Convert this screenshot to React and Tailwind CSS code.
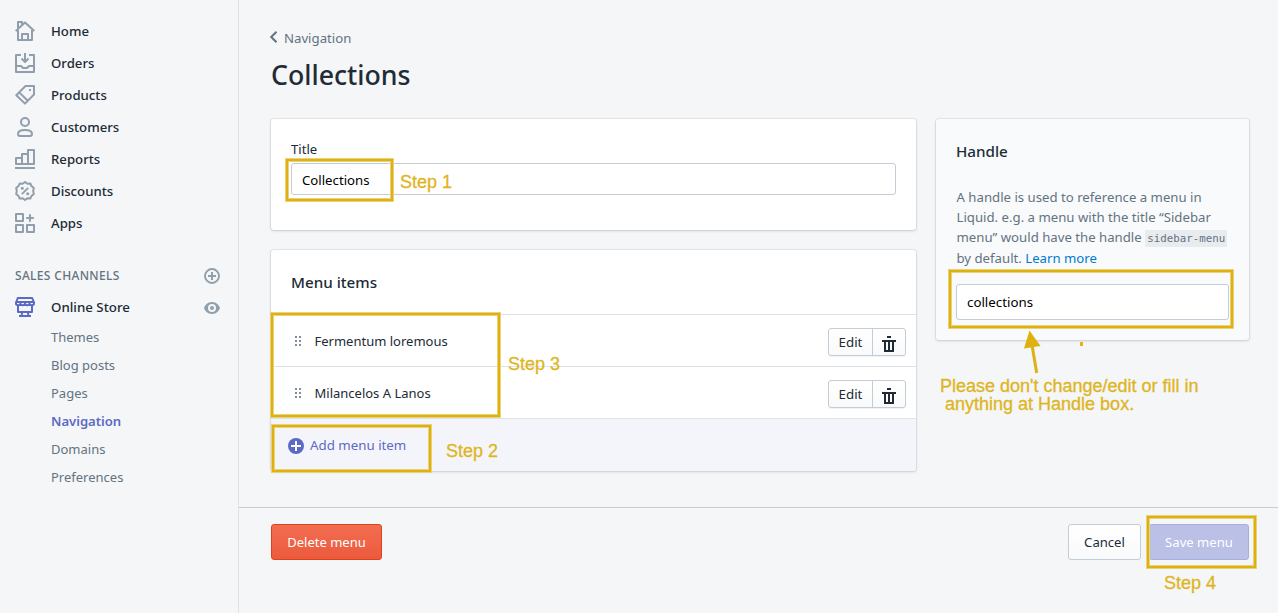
const svgBase = { width: 20, height: 20, viewBox: '0 0 20 20', fill: 'none', stroke: 'currentColor', strokeWidth: 2, strokeLinejoin: 'round' };

const HomeIcon = () => (
  <svg {...svgBase}>
    <path d="M3 9v10h14V9M7 19v-6h6v6" />
    <path d="M0.7 9.9L10 1.4l9.3 8.5M3 8V1h4v2.6" />
  </svg>
);
const OrdersIcon = () => (
  <svg {...svgBase}>
    <path d="M6 2H1v17h18V2h-5M1 13h5l2 2h4l2-2h5" />
    <path d="M10 0v9M6.500 5.500L10 9l3.500-3.500" />
  </svg>
);
const ProductsIcon = () => (
  <svg {...svgBase}>
    <path d="M10.5 1H19v8.500L10 18.600 1.300 10.200z" />
    <path d="M4.200 7.400l8.600 8.400" />
    <path d="M14 5h2" />
  </svg>
);
const CustomersIcon = () => (
  <svg {...svgBase}>
    <circle cx="10" cy="5" r="4" />
    <path d="M3 17c0-2.400 2.500-4 7-4s7 1.600 7 4c0 1.200-.6 2-2 2H5c-1.400 0-2-.8-2-2z" />
  </svg>
);
const ReportsIcon = () => (
  <svg {...svgBase}>
    <path d="M1 15V9h6v6zM7 15V5h6v10zM13 15V1h6v14zM0 19h20" />
  </svg>
);
const DiscountsIcon = () => (
  <svg {...svgBase}>
    <path d="M10 1l2.400 1.700 2.900-.3 1.200 2.700 2.300 2-.6 2.900.6 2.900-2.300 2-1.200 2.700-2.900-.3L10 19l-2.400-1.700-2.900.3-1.200-2.700-2.300-2 .6-2.900-.6-2.900 2.300-2 1.200-2.700 2.900.3z" />
    <path d="M6.800 13.200l6.400-6.400" strokeWidth="1.800" />
    <circle cx="7.300" cy="7.300" r="1.500" fill="currentColor" stroke="none" />
    <circle cx="12.700" cy="12.700" r="1.500" fill="currentColor" stroke="none" />
  </svg>
);
const AppsIcon = () => (
  <svg {...svgBase}>
    <path d="M1 1h7v7H1zM1 12h7v7H1zM12 12h7v7h-7zM15 1.200v7.600M11.200 5h7.600" />
  </svg>
);
const StoreIcon = () => (
  <svg {...svgBase}>
    <path d="M1 5.500L2.800 1h14.400L19 5.500M1 5h18" />
    <path d="M1 5v1.400c0 2.300 4.500 2.300 4.500 0 0 2.300 4.500 2.300 4.500 0 0 2.300 4.500 2.300 4.500 0 0 2.300 4.500 2.300 4.500 0V5" />
    <path d="M3 8v7h14V8M7.500 15l-1 3M12.500 15l1 3M4 19h12" />
  </svg>
);
const CirclePlus = () => (
  <svg width="16" height="16" viewBox="0 0 16 16" fill="none" stroke="currentColor" strokeWidth="2">
    <circle cx="8" cy="8" r="7" strokeWidth="1.900" />
    <path d="M8 4v8M4 8h8" />
  </svg>
);
const EyeIcon = () => (
  <svg width="16" height="12" viewBox="0 0 16 12" fill="currentColor">
    <path fillRule="evenodd" d="M8 0C3.500 0 .8 3.600 0 6c.8 2.400 3.500 6 8 6s7.200-3.600 8-6c-.8-2.400-3.500-6-8-6zm0 10a4 4 0 110-8 4 4 0 010 8z" />
    <circle cx="8" cy="6" r="2" />
  </svg>
);
const DragIcon = () => (
  <svg width="6" height="10" viewBox="0 0 6 10" fill="#818e9c">
    {[0, 4, 8].map((y) => (
      <g key={y}>
        <rect x="0" y={y} width="2" height="2" />
        <rect x="4" y={y} width="2" height="2" />
      </g>
    ))}
  </svg>
);
const TrashIcon = () => (
  <svg width="14" height="16" viewBox="0 0 14 16" fill="#212b36">
    <path fillRule="evenodd" d="M5 0h4v2H5zM0 4h14v2h-2v10H2V6H0zM4 6v8h2V6zM8 6v8h2V6z" />
  </svg>
);

const primary = [
  ['Home', HomeIcon],
  ['Orders', OrdersIcon],
  ['Products', ProductsIcon],
  ['Customers', CustomersIcon],
  ['Reports', ReportsIcon],
  ['Discounts', DiscountsIcon],
  ['Apps', AppsIcon],
];
const channels = ['Themes', 'Blog posts', 'Pages', 'Navigation', 'Domains', 'Preferences'];

function Sidebar() {
  return (
    <nav className="flex w-[239px] shrink-0 flex-col border-r border-[#dfe3e8] pt-[15px]">
      {primary.map(([label, Icon]) => (
        <a key={label} className="flex h-8 items-center gap-4 pl-[15px] text-[#919eab]">
          <Icon />
          <span className="pt-[2px] text-[13.2px] font-medium text-[#212b36]">{label}</span>
        </a>
      ))}
      <div className="mt-[21px] flex h-8 items-center justify-between pr-[18px] pl-[15px] text-[#919eab]">
        <span className="text-[12px] font-medium tracking-[0.33px] text-[#637381]">SALES CHANNELS</span>
        <CirclePlus />
      </div>
      <div className="-mt-px flex h-8 items-center pr-[18px] pl-[15px] text-[#5c6ac4]">
        <StoreIcon />
        <span className="ml-4 flex-1 pt-[2px] text-[13.3px] font-medium text-[#212b36]">Online Store</span>
        <span className="pt-[2px] text-[#919eab]"><EyeIcon /></span>
      </div>
      {channels.map((label) => (
        <a
          key={label}
          className={
            label === 'Navigation'
              ? 'flex h-7 items-center pt-[2px] pl-[51px] text-[13.1px] font-semibold text-[#5c6ac4]'
              : 'flex h-7 items-center pt-[2px] pl-[51px] text-[13px] text-[#637381]'
          }
        >
          {label}
        </a>
      ))}
    </nav>
  );
}

const cardShadow = 'shadow-[0_0_0_1px_rgba(63,63,68,0.07),0_1px_3px_0_rgba(63,63,68,0.18)]';

function MenuRow({ label }) {
  return (
    <div className="flex h-[52px] items-center border-t border-[#dfe3e8] pr-[10px] pl-6">
      <DragIcon />
      <span className="ml-[13.500px] flex-1 pt-[2px] text-[13px] text-[#212b36]">{label}</span>
      <div className="mt-[3px] flex h-7 w-[78px] rounded-[3px] border border-[#c4cdd5] bg-gradient-to-b from-white to-[#f9fafb] text-[13.3px] text-[#212b36] shadow-[0_1px_0_rgba(22,29,37,0.05)]">
        <span className="flex w-11 items-center justify-center border-r border-[#c4cdd5] pt-[2px]">Edit</span>
        <span className="flex flex-1 items-center justify-center pt-[3px]"><TrashIcon /></span>
      </div>
    </div>
  );
}

const frame = 'absolute border-2 border-[#dfb10f] shadow-[0_0_0_1px_#ead27c,inset_0_0_0_1px_#ead27c]';
const note = "absolute whitespace-pre font-['Liberation_Sans',sans-serif] text-[18px] leading-[18px] text-[#dfb51e] [-webkit-text-stroke:0.3px_#dfb51e]";

function Annotations() {
  return (
    <div className="pointer-events-none absolute inset-0">
      <div className={`${frame} top-[159px] left-[286px] h-[42px] w-[107px]`} />
      <div className={`${frame} top-[313px] left-[271px] h-[104px] w-[229px]`} />
      <div className={`${frame} top-[425px] left-[272px] h-[47px] w-[159px]`} />
      <div className={`${frame} top-[270px] left-[949px] h-[58px] w-[284px]`} />
      <div className={`${frame} top-[516px] left-[1147px] h-[52px] w-[109px]`} />
      <span className={`${note} top-[173px] left-[400px]`}>Step 1</span>
      <span className={`${note} top-[355px] left-[508px]`}>Step 3</span>
      <span className={`${note} top-[442px] left-[446px]`}>Step 2</span>
      <span className={`${note} top-[574px] left-[1164px]`}>Step 4</span>
      <span className={`${note} top-[377px] left-[940px]`}>{"Please don't change/edit or fill in\n anything at Handle box."}</span>
      <svg className="absolute top-[330px] left-[1020px]" width="70" height="46" viewBox="0 0 70 46">
        <path d="M9.500 0.500L20.500 16 4 18.500z" fill="#dfb10f" />
        <path d="M12 15l4.700 28" stroke="#dfb10f" strokeWidth="3" />
        <rect x="60" y="12" width="3" height="4" fill="#dfb51e" />
      </svg>
    </div>
  );
}

export default function App() {
  return (
    <div className="relative flex h-[613px] w-[1278px] overflow-hidden bg-[#f4f6f8] font-['Noto_Sans',sans-serif] text-[13.3px] text-[#212b36]">
      <Sidebar />
      <main className="flex flex-1 flex-col">
        <div className="h-[507px] pt-[28px] pr-[29px] pl-8">
          <a className="flex h-5 items-center text-[#637381]">
            <svg width="8" height="12" viewBox="0 0 8 12" fill="none" stroke="#637381" strokeWidth="2" className="-mt-[2px] -ml-[2px]"><path d="M7.500 .8L2.200 6l5.300 5.200" /></svg>
            <span className="ml-[7px] pt-[2px] text-[13.2px]">Navigation</span>
          </a>
          <h1 className="mt-2 h-10 text-[26.7px] leading-[38px] font-medium">Collections</h1>
          <div className="mt-[23px] flex gap-5">
            <div className="flex w-[645px] flex-col gap-5">
              <section className={`${cardShadow} h-[111px] rounded-[3px] bg-white px-5 pt-5`}>
                <label className="block h-6 text-[13.100px] leading-5">Title</label>
                <div className="flex h-8 items-center rounded-[3px] border border-[#c4cdd5] pt-[3px] pl-[10px] text-[13.200px] text-black">Collections</div>
              </section>
              <section className={`${cardShadow} h-[221px] overflow-hidden rounded-[3px] bg-white`}>
                <h2 className="h-16 px-5 pt-5 text-[15.2px] leading-6 font-medium">Menu items</h2>
                <MenuRow label="Fermentum loremous" />
                <MenuRow label="Milancelos A Lanos" />
                <div className="flex h-[53px] items-center border-t border-[#dfe3e8] bg-[#f4f5fa] pl-[17px] text-[#5c6ac4]">
                  <svg className="mt-[2px]" width="16" height="16" viewBox="0 0 16 16"><circle cx="8" cy="8" r="8" fill="#5c6ac4" /><path d="M8 3v10M3 8h10" stroke="white" strokeWidth="2" /></svg>
                  <span className="ml-[6px] pt-[2px]">Add menu item</span>
                </div>
              </section>
            </div>
            <section className={`${cardShadow} h-[221px] w-[313px] rounded-[3px] bg-[#f9fafb] px-5 pt-5`}>
              <h2 className="text-[15.2px] leading-6 font-medium">Handle</h2>
              <div className="mt-6 h-[81px] text-[13.2px] leading-5 whitespace-nowrap text-[#637381]">
                <p className="mb-px pl-[0.500px]">
                  A handle is used to reference a menu in<br />
                  Liquid. e.g. a menu with the title “Sidebar<br />
                  menu” would have the handle <code className="bg-[#e9ecef] px-[2px] py-[2px] font-['DejaVu_Sans_Mono',monospace] text-[10.8px] leading-none">sidebar-menu</code>
                </p>
                <p className="pl-[0.500px]">by default. <a className="text-[#007ace]">Learn more</a></p>
              </div>
              <div className="mt-4 flex h-9 items-center rounded-[3px] border border-[#c4cdd5] bg-white pt-px pl-[10px] text-black">collections</div>
            </section>
          </div>
        </div>
        <footer className="flex h-[106px] border-t border-[#c4cdd5] pt-4 pr-[29px] pl-8">
          <button className="h-9 w-[111px] rounded-[3px] border border-[#e0411b] bg-gradient-to-b from-[#f36d51] to-[#ec5a3c] pt-[2px] text-[13px] text-white">Delete menu</button>
          <button className="ml-auto h-9 w-[73px] rounded-[3px] border border-[#c4cdd5] bg-gradient-to-b from-white to-[#f9fafb] pt-[2px] text-[13.1px]">Cancel</button>
          <button className="ml-2 h-9 w-[100px] rounded-[3px] border border-[#a7afe0] bg-[#bac0e6] pt-[2px] text-[13.1px] text-white">Save menu</button>
        </footer>
      </main>
      <Annotations />
    </div>
  );
}
